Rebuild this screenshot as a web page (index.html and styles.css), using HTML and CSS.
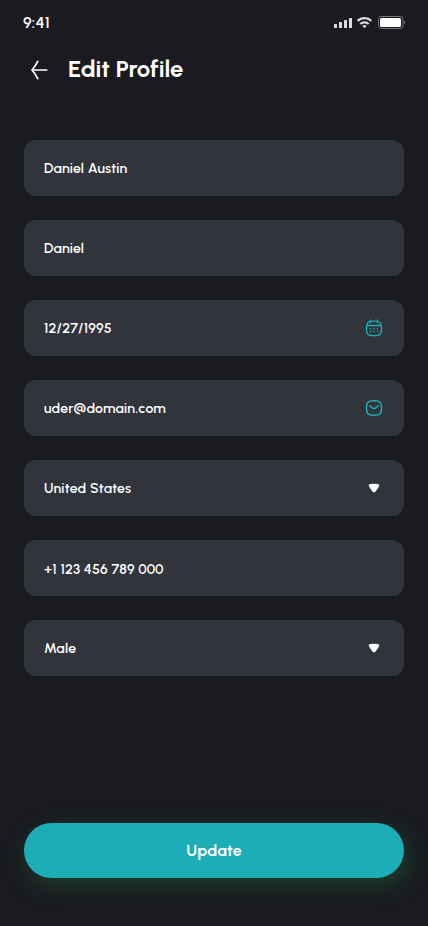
FILE: index.html
```html
<!DOCTYPE html>
<html lang="en">
<head>
<meta charset="utf-8">
<meta name="viewport" content="width=device-width, initial-scale=1">
<title>Edit Profile</title>
<link rel="stylesheet" href="styles.css">
</head>
<body>
<main class="screen">
  <div class="status-bar">
    <span class="time">9:41</span>
    <svg class="status-icons" width="72" height="14" viewBox="0 0 72 14">
      <g fill="#dedede">
        <rect x="0" y="8" width="3" height="4" rx=".6"/>
        <rect x="5" y="6" width="3" height="6" rx=".6"/>
        <rect x="10" y="4" width="3" height="8" rx=".6"/>
        <rect x="15" y="2" width="3" height="10" rx=".6"/>
      </g>
      <g fill="none" stroke="#dedede" stroke-width="2.200">
        <path d="M23.700 4.900a9.700 9.700 0 0 1 13.600 0"/>
        <path d="M26.300 8a6 6 0 0 1 8.400 0"/>
      </g>
      <path d="M28.300 10a3.400 3.400 0 0 1 4.400 0L30.500 12.300z" fill="#dedede"/>
      <rect x="44.500" y=".5" width="24.500" height="12" rx="3" fill="none" stroke="#75767a"/>
      <rect x="46" y="2" width="21" height="9" rx="1.600" fill="#fff"/>
      <path d="M70 4.500v4c1.300-.5 1.300-3.500 0-4z" fill="#75767a"/>
    </svg>
  </div>
  <header class="header">
    <svg class="back" width="18" height="20" viewBox="0 0 18 20" fill="none" stroke="#fff" stroke-width="1.700" stroke-linecap="round" stroke-linejoin="round">
      <path d="M16.700 10H2M7.700 1.300Q5.500 6 2 10Q5.500 14 7.700 18.700"/>
    </svg>
    <h1 class="title">Edit Profile</h1>
  </header>
  <form class="form">
    <div class="field"><span class="value">Daniel Austin</span></div>
    <div class="field"><span class="value">Daniel</span></div>
    <div class="field"><span class="value">12/27/1995</span>
      <svg width="20" height="20" viewBox="0 0 20 20" fill="none" stroke="#1cadb7" stroke-width="1.300" stroke-linecap="round">
        <path d="M10 3.200c6.100 0 7.500 1.400 7.500 7.200s-1.400 7.300-7.500 7.300-7.500-1.500-7.500-7.300S3.900 3.200 10 3.200zM2.800 7.500h14.400M6.500 2v2.800M13.500 2v2.800"/>
        <path stroke-width="1.500" d="M6.500 10.700h.01M10 10.700h.01M13.500 10.700h.01M6.500 13.600h.01M10 13.600h.01M13.500 13.600h.01"/>
      </svg>
    </div>
    <div class="field"><span class="value">uder@domain.com</span>
      <svg width="20" height="20" viewBox="0 0 20 20" fill="none" stroke="#1cadb7" stroke-width="1.400" stroke-linecap="round" stroke-linejoin="round">
        <path d="M10 2.700c6 0 7.500 1.500 7.500 7.300s-1.500 7.300-7.500 7.300S2.500 15.800 2.500 10 4 2.700 10 2.700z"/>
        <path d="M5.800 7.700 8.300 9.900Q10 11.300 11.700 9.900L14.200 7.700"/>
      </svg>
    </div>
    <div class="field"><span class="value">United States</span>
      <svg width="20" height="20" viewBox="0 0 20 20" fill="#fff"><path d="M6.200 5.900Q10 5.600 13.800 5.900Q15.900 6.200 14.900 8.500L12 12.900Q10 15.600 8 12.900L5.100 8.500Q4.100 6.200 6.200 5.900z"/></svg>
    </div>
    <div class="field"><span class="value phone">+1 123 456 789 000</span></div>
    <div class="field"><span class="value">Male</span>
      <svg width="20" height="20" viewBox="0 0 20 20" fill="#fff"><path d="M6.200 5.900Q10 5.600 13.800 5.900Q15.900 6.200 14.900 8.500L12 12.900Q10 15.600 8 12.900L5.100 8.500Q4.100 6.200 6.200 5.900z"/></svg>
    </div>
  </form>
  <button class="update" type="button">Update</button>
</main>
</body>
</html>
```
FILE: styles.css
```css
* { box-sizing: border-box; }
body { margin: 0; background: #1a1b20; color: #fff; font-family: Urbanist, Lato, sans-serif; }
.screen { display: flex; flex-direction: column; width: 428px; height: 926px; padding-bottom: 48px; background: #1a1b20; }
.status-bar { display: flex; align-items: center; justify-content: space-between; height: 46px; padding: 0 22px 0 23px; }
.time { padding-bottom: 2px; font-size: 16px; font-weight: 600; letter-spacing: .2px; }
.header { display: flex; align-items: center; height: 48px; padding-left: 30px; gap: 20px; }
.title { margin: 0; padding-bottom: 2px; font-size: 24px; font-weight: 700; line-height: 32px; letter-spacing: -.02px; }
.form { display: flex; flex-direction: column; gap: 24px; padding: 46px 24px 0; }
.field { display: flex; align-items: center; justify-content: space-between; height: 56px; padding: 0 20px; border-radius: 12px; background: #32343c; }
.value { padding-top: 2px; font-size: 14px; font-weight: 600; line-height: 20px; letter-spacing: .2px; }
.phone { padding-top: 4px; }
.update { height: 55px; margin: auto 24px 0; border: 0; border-radius: 28px; background: #1cadb7; color: #fff; font-family: inherit; font-size: 16px; font-weight: 700; letter-spacing: .2px; box-shadow: 4px 8px 24px rgba(27, 172, 75, .25); }
```
